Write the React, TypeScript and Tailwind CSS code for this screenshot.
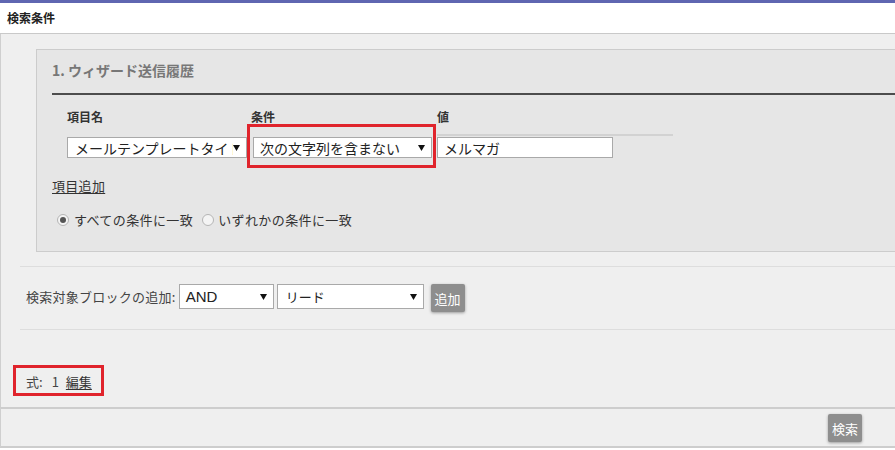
import React from "react";

const jp = { fontFamily: '"Noto Sans CJK JP", "Noto Sans", sans-serif' } as React.CSSProperties;

function Arrow() {
  return (
    <svg width="7" height="7" viewBox="0 0 7 7" className="shrink-0">
      <polygon points="0,1 7,1 3.5,7" fill="#111" />
    </svg>
  );
}

function Select({ text, w, h, size, pl, font, clip }: { text: string; w: number; h: number; size: number; pl: number; font?: string; clip?: boolean }) {
  return (
    <div
      className="flex items-center bg-white border border-[#a9a9a9] pr-[6px] shrink-0"
      style={{ width: w, height: h, paddingLeft: pl }}
    >
      <span
        className={clip ? "flex-1 overflow-hidden whitespace-nowrap text-[#222] leading-none" : "flex-1 whitespace-nowrap text-[#222] leading-none"}
        style={{ fontSize: size, fontFamily: font }}
      >
        {text}
      </span>
      <Arrow />
    </div>
  );
}

function Radio({ checked }: { checked?: boolean }) {
  return (
    <span className="w-[12px] h-[12px] rounded-full border border-[#b5b5b5] bg-[#f4f4f4] flex items-center justify-center shrink-0">
      {checked && <span className="w-[6px] h-[6px] rounded-full bg-[#555]" />}
    </span>
  );
}

export default function App() {
  return (
    <div className="w-[895px] h-[450px] overflow-hidden bg-white" style={jp}>
      <div className="h-[3px] bg-[#5f66b1]" />
      <div className="h-[31px] bg-white border-b border-[#c9c9c9] flex items-center pl-[7px] text-[12px] font-bold text-[#222] leading-none">
        検索条件
      </div>
      <div className="h-[373px] bg-[#efefef] border-l border-[#cfcfcf] pt-[15px]">
        {/* panel */}
        <div className="ml-[35px] bg-[#e6e6e6] border-t border-l border-b border-[#cccccc] pl-[15px] pt-[10px] pb-[22px]">
          <div className="h-[20px] text-[14px] font-bold text-[#777] leading-[20px]">1. ウィザード送信履歴</div>
          <div className="mt-[13px] h-[2px] bg-[#4d4d4d]" />
          <div className="ml-[15px] mt-[14px]">
            <div className="grid grid-cols-[184px_186px_236px] h-[27px] text-[12px] font-bold text-[#333] leading-[16px]">
              <div>項目名</div>
              <div>条件</div>
              <div className="border-b-2 border-[#d2d2d2]">値</div>
            </div>
            <div className="mt-[1px] flex items-start">
              <div className="w-[186px] shrink-0">
                <Select text="メールテンプレートタイトル" w={180} h={21} size={14} pl={7} clip />
              </div>
              <div className="relative w-[184px] shrink-0">
                <Select text="次の文字列を含まない" w={179} h={21} size={14} pl={6} />
                <div className="absolute left-[-6px] top-[-13px] w-[189px] h-[44px] border-[3px] border-[#e0242c]" />
              </div>
              <div className="w-[176px] h-[21px] bg-white border border-[#a9a9a9] flex items-center pl-[6px] text-[14px] text-[#222] leading-none">
                メルマガ
              </div>
            </div>
          </div>
          <div className="mt-[19px] text-[13px] leading-[18px] text-[#333] underline underline-offset-2 tracking-[0.3px]">項目追加</div>
          <div className="mt-[16px] flex items-center h-[18px] text-[13px] leading-[18px] text-[#333] tracking-[0.4px]">
            <span className="ml-[5px] mr-[5px]"><Radio checked /></span>
            <span>すべての条件に一致</span>
            <span className="ml-[9px] mr-[4px]"><Radio /></span>
            <span>いずれかの条件に一致</span>
          </div>
        </div>
        {/* add block */}
        <div className="ml-[19px] mt-[14px] border-t border-[#dddddd] border-b pt-[17px] pb-[17px]">
          <div className="flex items-start h-[28px] pl-[6px]">
            <span className="text-[13px] text-[#444] leading-[25px] mr-[3px] tracking-[0.25px]">検索対象ブロックの追加:</span>
            <Select text="AND" w={95} h={25} size={15} pl={6} font='"Liberation Sans", Arial, sans-serif' />
            <span className="w-[3px]" />
            <Select text="リード" w={147} h={25} size={13} pl={8} />
            <span className="w-[7px]" />
            <div className="w-[34px] h-[28px] bg-[#8e8e8e] rounded-[2px] shadow-[0_1px_3px_rgba(0,0,0,0.35)] text-white text-[13px] flex items-center justify-center leading-none">
              追加
            </div>
          </div>
        </div>
        {/* expression */}
        <div className="mt-[38px] pl-[25px]">
          <div className="relative inline-flex items-center h-[18px] text-[13px] leading-[18px] text-[#444]">
            <span>式:</span>
            <span className="ml-[9px]">1</span>
            <span className="ml-[7px] underline underline-offset-2 text-[#333]">編集</span>
            <div className="absolute left-[-13px] top-[-8px] w-[91px] h-[31px] border-[3px] border-[#e0242c]" />
          </div>
        </div>
      </div>
      {/* footer */}
      <div className="h-[41px] bg-[#efefef] border-t-2 border-b-2 border-[#cdcdcd] border-l border-l-[#cfcfcf] flex items-start justify-end pr-[33px] pt-[5px]">
        <div className="w-[34px] h-[28px] bg-[#8e8e8e] rounded-[2px] shadow-[0_1px_3px_rgba(0,0,0,0.35)] text-white text-[13px] flex items-center justify-center leading-none">
          検索
        </div>
      </div>
    </div>
  );
}
